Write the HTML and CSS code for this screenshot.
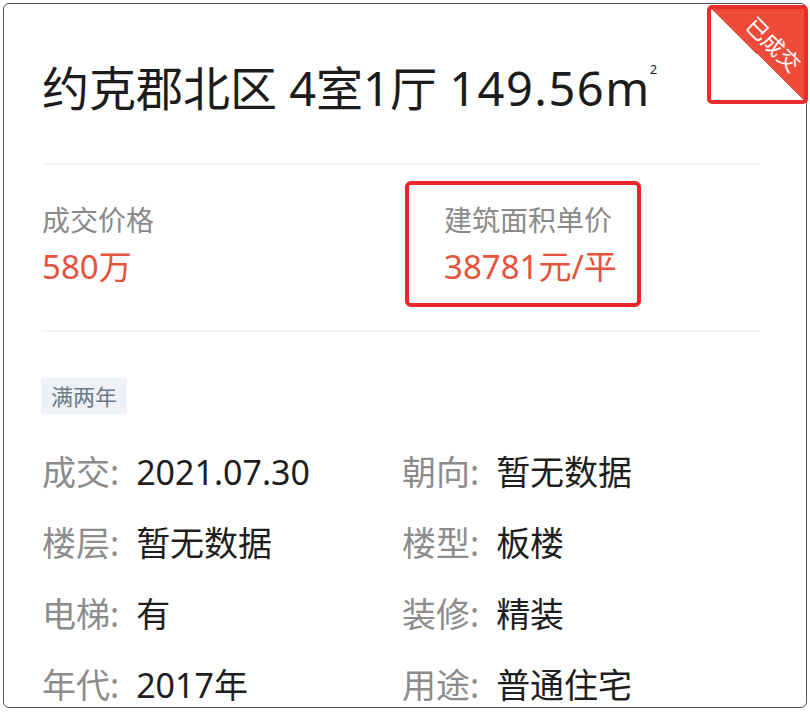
FILE: index.html
```html
<!DOCTYPE html>
<html lang="zh-CN">
<head>
    <meta charset="UTF-8">
    <meta name="viewport" content="width=device-width, initial-scale=1.0">
    <title>约克郡北区 成交记录</title>
    <link rel="stylesheet" href="styles.css">
</head>
<body>
    <div class="card">
        <!-- sold badge in the corner -->
        <div class="badge"><span class="badge-text">已成交</span></div>

        <h1 class="title">约克郡北区 4室1厅 <span class="area">149.56m</span><sup>2</sup></h1>

        <div class="prices">
            <div class="price-cell">
                <div class="price-label">成交价格</div>
                <div class="price-value">580万</div>
            </div>
            <div class="price-cell">
                <div class="price-label">建筑面积单价</div>
                <div class="price-value">38781元/平</div>
                <div class="mark"></div>
            </div>
        </div>

        <div class="tags"><span class="tag">满两年</span></div>

        <div class="info">
            <div class="info-item"><span class="info-label">成交:</span><span class="info-value">2021.07.30</span></div>
            <div class="info-item"><span class="info-label">朝向:</span><span class="info-value">暂无数据</span></div>
            <div class="info-item"><span class="info-label">楼层:</span><span class="info-value">暂无数据</span></div>
            <div class="info-item"><span class="info-label">楼型:</span><span class="info-value">板楼</span></div>
            <div class="info-item"><span class="info-label">电梯:</span><span class="info-value">有</span></div>
            <div class="info-item"><span class="info-label">装修:</span><span class="info-value">精装</span></div>
            <div class="info-item"><span class="info-label">年代:</span><span class="info-value">2017年</span></div>
            <div class="info-item"><span class="info-label">用途:</span><span class="info-value">普通住宅</span></div>
        </div>
    </div>
</body>
</html>
```

FILE: styles.css
```css
body {
    font-family: "Noto Sans", "Noto Sans CJK SC", sans-serif;
    background-color: #fff;
    margin: 0;
    padding: 3px;
}
.card {
    position: relative;
    height: 705px;
    box-sizing: border-box;
    border: 1px solid #555;
    border-radius: 6px;
    padding: 0 46px 0 38px;
}
.badge {
    position: absolute;
    top: 1px;
    right: -2px;
    width: 101px;
    height: 99px;
    box-sizing: border-box;
    border: 4px solid #ea2d2d;
    border-radius: 5px;
    background: linear-gradient(to bottom left, #ee4b3b 50%, #fff 50%);
}
.badge-text {
    position: absolute;
    top: 23px;
    left: 30px;
    color: #fff;
    font-size: 22px;
    line-height: 24px;
    white-space: nowrap;
    transform: rotate(45deg);
}
.title {
    margin: 0;
    padding: 34px 0 44px;
    font-size: 47px;
    font-weight: 400;
    line-height: 62px;
    color: #1c1c1c;
    white-space: nowrap;
    border-bottom: 2px solid #f3f3f3;
}
.title .area {
    letter-spacing: 1.5px;
}
.title sup {
    font-size: 13px;
    vertical-align: 32px;
    margin-left: -1px;
}
.prices {
    display: grid;
    grid-template-columns: 402px 1fr;
    padding: 36px 0 43px;
    border-bottom: 2px solid #f3f3f3;
}
.price-cell {
    position: relative;
}
.price-label {
    font-size: 28px;
    line-height: 38px;
    color: #8a8a8a;
}
.price-value {
    margin-top: 8px;
    font-size: 33px;
    line-height: 40px;
    color: #e5533d;
}
.mark {
    position: absolute;
    top: -20px;
    left: -39px;
    width: 236px;
    height: 126px;
    box-sizing: border-box;
    border: 4px solid #e8262a;
    border-radius: 6px;
}
.tags {
    margin-top: 46px;
    height: 36px;
}
.tag {
    display: inline-block;
    margin-left: -1px;
    padding: 0 10px;
    font-size: 22px;
    line-height: 36px;
    color: #6b7a88;
    background-color: #eef1f5;
    border-radius: 3px;
}
.info {
    display: grid;
    grid-template-columns: 360px 1fr;
    row-gap: 27px;
    margin-top: 36px;
}
.info-item {
    font-size: 34px;
    line-height: 44px;
    white-space: nowrap;
}
.info-label {
    color: #8c8c8c;
    margin-right: 17px;
}
.info-value {
    color: #1e1e1e;
}
```
